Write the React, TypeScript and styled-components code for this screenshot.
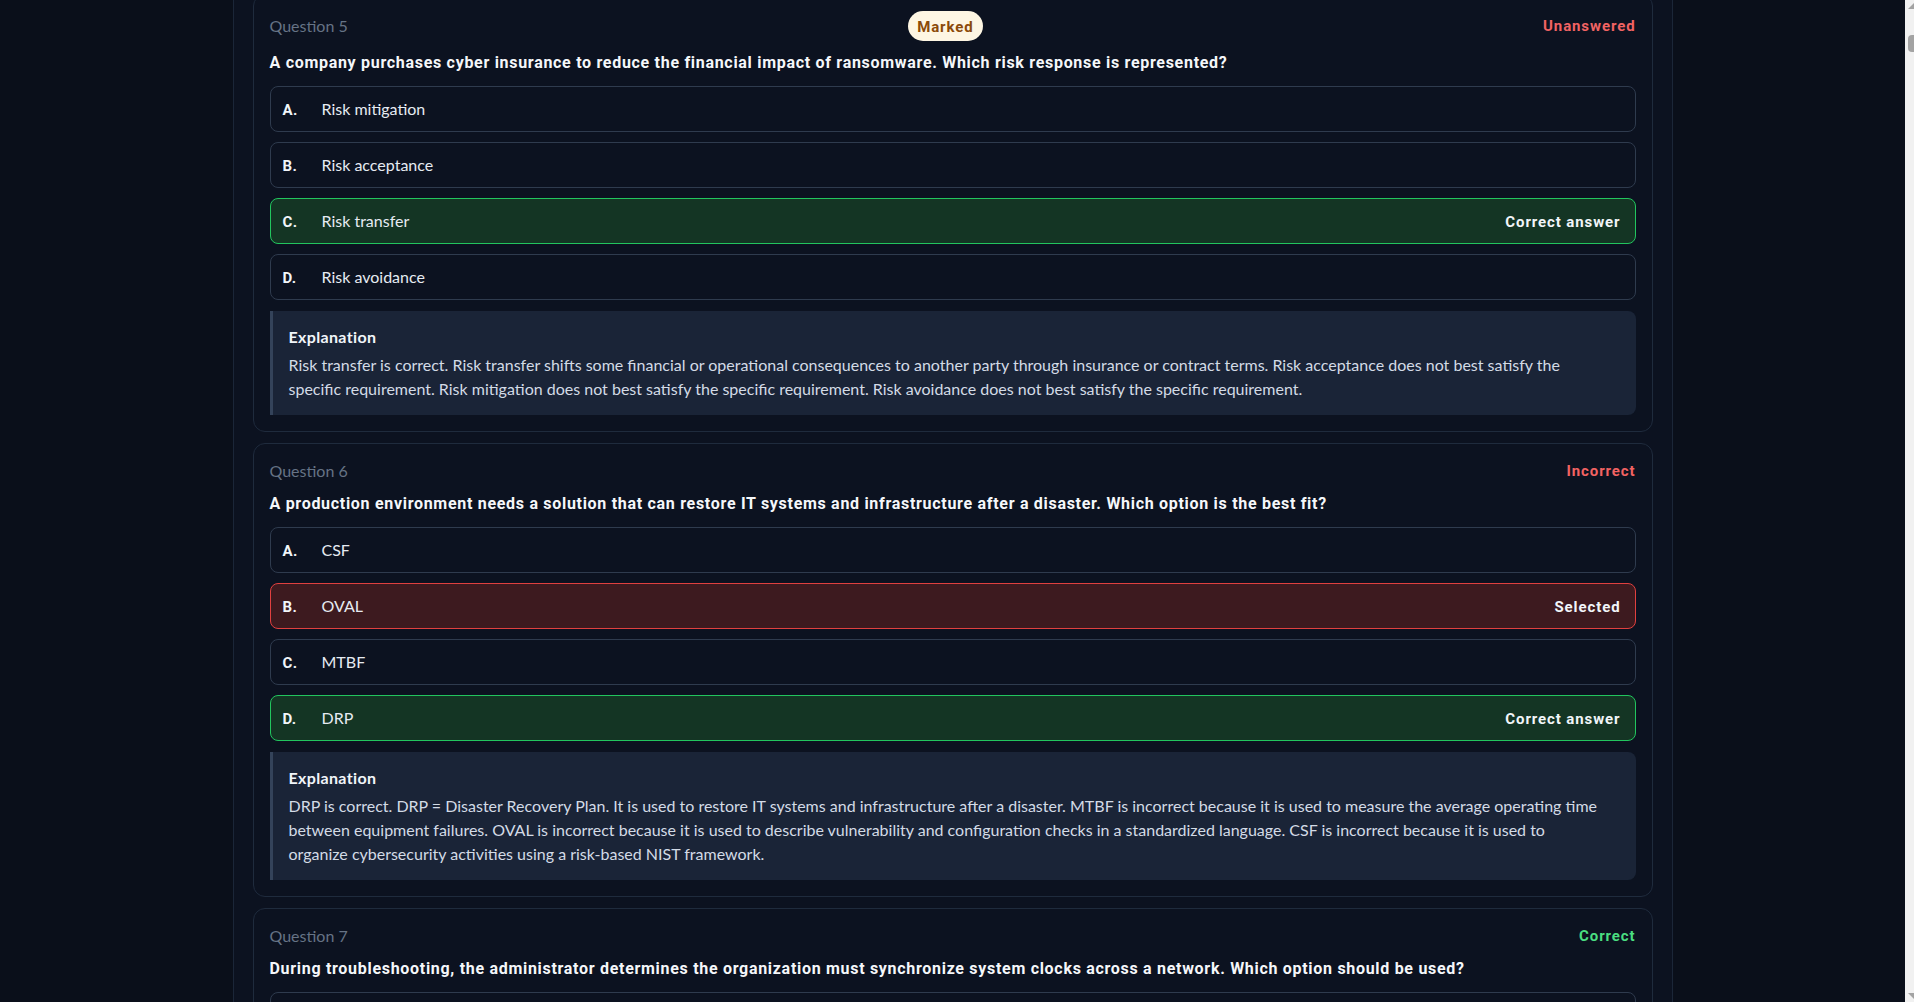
import React from "react";
import styled, { createGlobalStyle, css } from "styled-components";

type OptionState = "idle" | "correct" | "wrong";
type Tone = "red" | "green";

interface Choice {
  letter: string;
  text: string;
  state: OptionState;
  tag?: string;
}

interface QuestionData {
  number: number;
  marked?: boolean;
  status: string;
  tone: Tone;
  prompt: string;
  choices: Choice[];
  explanation: string;
}

const questions: QuestionData[] = [
  {
    number: 5,
    marked: true,
    status: "Unanswered",
    tone: "red",
    prompt:
      "A company purchases cyber insurance to reduce the financial impact of ransomware. Which risk response is represented?",
    choices: [
      { letter: "A.", text: "Risk mitigation", state: "idle" },
      { letter: "B.", text: "Risk acceptance", state: "idle" },
      { letter: "C.", text: "Risk transfer", state: "correct", tag: "Correct answer" },
      { letter: "D.", text: "Risk avoidance", state: "idle" },
    ],
    explanation:
      "Risk transfer is correct. Risk transfer shifts some financial or operational consequences to another party through insurance or contract terms. Risk acceptance does not best satisfy the specific requirement. Risk mitigation does not best satisfy the specific requirement. Risk avoidance does not best satisfy the specific requirement.",
  },
  {
    number: 6,
    status: "Incorrect",
    tone: "red",
    prompt:
      "A production environment needs a solution that can restore IT systems and infrastructure after a disaster. Which option is the best fit?",
    choices: [
      { letter: "A.", text: "CSF", state: "idle" },
      { letter: "B.", text: "OVAL", state: "wrong", tag: "Selected" },
      { letter: "C.", text: "MTBF", state: "idle" },
      { letter: "D.", text: "DRP", state: "correct", tag: "Correct answer" },
    ],
    explanation:
      "DRP is correct. DRP = Disaster Recovery Plan. It is used to restore IT systems and infrastructure after a disaster. MTBF is incorrect because it is used to measure the average operating time between equipment failures. OVAL is incorrect because it is used to describe vulnerability and configuration checks in a standardized language. CSF is incorrect because it is used to organize cybersecurity activities using a risk-based NIST framework.",
  },
  {
    number: 7,
    status: "Correct",
    tone: "green",
    prompt:
      "During troubleshooting, the administrator determines the organization must synchronize system clocks across a network. Which option should be used?",
    choices: [
      { letter: "A.", text: "NTP", state: "idle" },
      { letter: "B.", text: "SNMP", state: "idle" },
      { letter: "C.", text: "LDAP", state: "idle" },
      { letter: "D.", text: "SFTP", state: "idle" },
    ],
    explanation:
      "NTP is correct. NTP = Network Time Protocol. It is used to synchronize system clocks across a network.",
  },
];

const GlobalStyle = createGlobalStyle`
  * { box-sizing: border-box; }
  html, body {
    margin: 0;
    padding: 0;
    height: 100%;
    background: #0a0f1a;
  }
  body {
    font-family: Lato, "Noto Sans", "Liberation Sans", sans-serif;
    -webkit-font-smoothing: antialiased;
  }
  #root { height: 100%; }
`;

/* bold labels use a tighter, DIN-like face with open tracking */
const strongFace = css`
  font-family: Roboto, "Noto Sans", "Liberation Sans", sans-serif;
  font-weight: 700;
  letter-spacing: 0.9px;
`;

const Shell = styled.div`
  display: grid;
  grid-template-columns: 1fr 9px;
  height: 100vh;
  overflow: hidden;
`;

const Viewport = styled.div`
  overflow: hidden;
  background: #0a0f1a;
`;

const Page = styled.main`
  max-width: 1440px;
  min-height: 100%;
  margin: 0 auto;
  padding: 0 19px;
  background: #0c1220;
  border-left: 1px solid #1b2638;
  border-right: 1px solid #1b2638;
`;

/* the list is scrolled a few pixels past the top of question 5 */
const QuestionList = styled.div`
  display: flex;
  flex-direction: column;
  gap: 11px;
  margin-top: -6px;
`;

const Card = styled.section`
  border: 1px solid #1f2b3d;
  border-radius: 12px;
  padding: 16px;
  background: #0c1220;
`;

const CardHeader = styled.header`
  display: flex;
  align-items: center;
  justify-content: space-between;
  min-height: 22px;
  margin-bottom: 11px;
`;

const QuestionNumber = styled.span`
  font-size: 16px;
  line-height: 22px;
  color: #667385;
`;

const MarkedBadge = styled.span`
  ${strongFace};
  display: inline-flex;
  align-items: center;
  height: 30px;
  padding: 1px 9px 0;
  border-radius: 15px;
  background: #fef6e3;
  color: #8b4a09;
  font-size: 15px;
`;

const Status = styled.span<{ $tone: Tone }>`
  ${strongFace};
  font-size: 15px;
  line-height: 22px;
  color: ${(p) => (p.$tone === "green" ? "#4ade80" : "#f26363")};
`;

const Prompt = styled.p`
  ${strongFace};
  margin: 0 0 12px;
  font-size: 16px;
  line-height: 22px;
  letter-spacing: 0.7px;
  color: #f5f7fa;
`;

const Options = styled.div`
  display: flex;
  flex-direction: column;
  gap: 10px;
`;

const optionTone = {
  idle: css`
    background: #0c1220;
    border-color: #2f3b4e;
  `,
  correct: css`
    background: #143524;
    border-color: #22c55e;
  `,
  wrong: css`
    background: #3d1a1f;
    border-color: #e0403f;
  `,
};

const Option = styled.div<{ $state: OptionState }>`
  display: flex;
  align-items: center;
  height: 46px;
  padding: 0 14px 0 12px;
  border: 1px solid;
  border-radius: 8px;
  ${(p) => optionTone[p.$state]}
`;

const OptionLine = styled.div`
  display: flex;
  align-items: baseline;
  flex: 1;
`;

const Letter = styled.span`
  ${strongFace};
  flex: none;
  width: 39px;
  font-size: 15px;
  letter-spacing: 0.4px;
  color: #f1f5f9;
`;

const OptionText = styled.span`
  flex: 1;
  font-size: 16px;
  color: #e6ebf2;
`;

const Tag = styled.span`
  ${strongFace};
  font-size: 15px;
  color: #f1f5f9;
`;

const Explanation = styled.div`
  margin-top: 11px;
  padding: 15px 32px 14px 16px;
  background: #1a2437;
  border-left: 3px solid #34435a;
  border-radius: 0 8px 8px 0;
`;

const ExplanationTitle = styled.h4`
  margin: 0 0 5px;
  font-size: 16px;
  font-weight: 700;
  line-height: 22px;
  letter-spacing: 0.35px;
  color: #f1f5f9;
`;

const ExplanationBody = styled.p`
  margin: 0;
  font-size: 16px;
  line-height: 24px;
  color: #d3dbe6;
`;

const ScrollTrack = styled.div`
  display: flex;
  flex-direction: column;
  align-items: flex-end;
  background: #f1f1f1;
`;

const ScrollThumb = styled.div`
  width: 6px;
  height: 17px;
  margin-top: 23px;
  border-radius: 4px 0 0 4px;
  background: #a3a3a3;
`;

const TrackSpacer = styled.div`
  flex: 1;
`;

const ArrowIcon = ({ down }: { down?: boolean }) => (
  <svg width="9" height="12" viewBox="0 0 9 12">
    {down ? (
      <path d="M3 3 L9 3 L9 9 Z" fill="#a3a3a3" />
    ) : (
      <path d="M3 9 L9 3 L9 9 Z" fill="#a3a3a3" />
    )}
  </svg>
);

const QuestionCard = ({ q }: { q: QuestionData }) => (
  <Card>
    <CardHeader>
      <QuestionNumber>Question {q.number}</QuestionNumber>
      {q.marked && <MarkedBadge>Marked</MarkedBadge>}
      <Status $tone={q.tone}>{q.status}</Status>
    </CardHeader>
    <Prompt>{q.prompt}</Prompt>
    <Options>
      {q.choices.map((c) => (
        <Option key={c.letter} $state={c.state}>
          <OptionLine>
            <Letter>{c.letter}</Letter>
            <OptionText>{c.text}</OptionText>
            {c.tag && <Tag>{c.tag}</Tag>}
          </OptionLine>
        </Option>
      ))}
    </Options>
    <Explanation>
      <ExplanationTitle>Explanation</ExplanationTitle>
      <ExplanationBody>{q.explanation}</ExplanationBody>
    </Explanation>
  </Card>
);

export default function App() {
  return (
    <>
      <GlobalStyle />
      <Shell>
        <Viewport>
          <Page>
            <QuestionList>
              {questions.map((q) => (
                <QuestionCard key={q.number} q={q} />
              ))}
            </QuestionList>
          </Page>
        </Viewport>
        <ScrollTrack>
          <ArrowIcon />
          <ScrollThumb />
          <TrackSpacer />
          <ArrowIcon down />
        </ScrollTrack>
      </Shell>
    </>
  );
}
